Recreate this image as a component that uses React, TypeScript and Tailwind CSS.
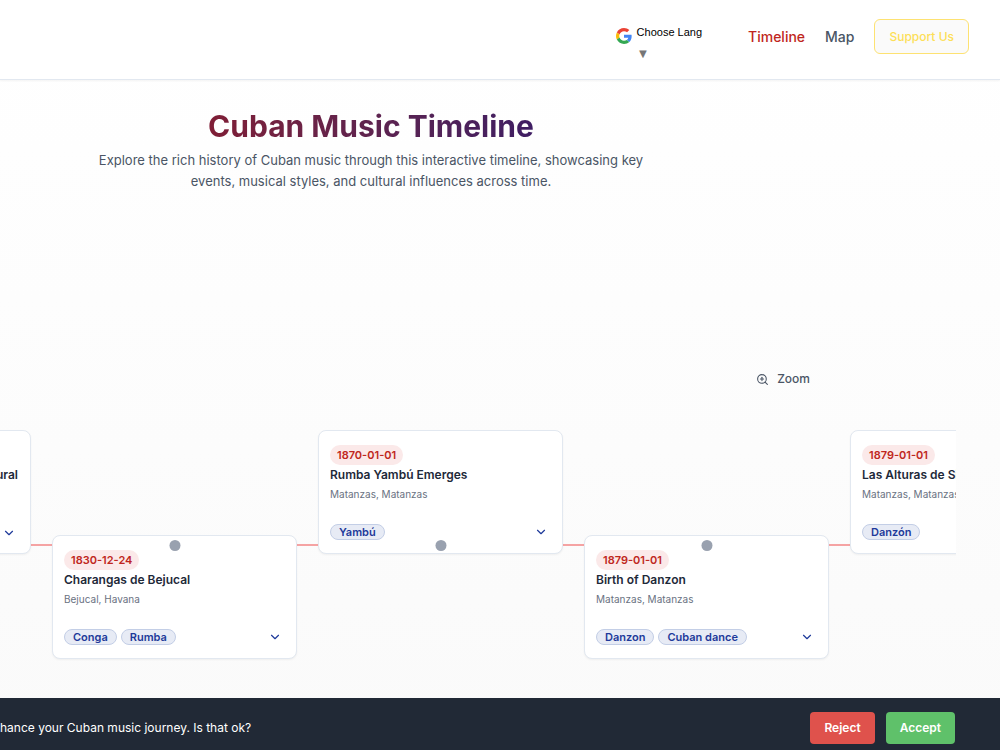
import { useState, type FC } from "react";
import { ChevronDown, ZoomIn } from "lucide-react";

type TimelineEvent = {
    id: number;
    date?: string;
    title: string;
    location?: string;
    styles: string[];
};

const events: TimelineEvent[] = [
    { id: 1, title: "ural", styles: [] },
    { id: 2, date: "1830-12-24", title: "Charangas de Bejucal", location: "Bejucal, Havana", styles: ["Conga", "Rumba"] },
    { id: 3, date: "1870-01-01", title: "Rumba Yambú Emerges", location: "Matanzas, Matanzas", styles: ["Yambú"] },
    { id: 4, date: "1879-01-01", title: "Birth of Danzon", location: "Matanzas, Matanzas", styles: ["Danzon", "Cuban dance"] },
    { id: 5, date: "1879-01-01", title: "Las Alturas de Si", location: "Matanzas, Matanzas", styles: ["Danzón"] },
];

const GoogleLogo: FC = () => (
    <svg viewBox="0 0 48 48" className="size-4" aria-hidden="true">
        <path fill="#EA4335" d="M24 9.5c3.54 0 6.71 1.22 9.21 3.6l6.85-6.85C35.9 2.38 30.47 0 24 0 14.62 0 6.51 5.38 2.56 13.22l7.98 6.19C12.43 13.72 17.74 9.5 24 9.5z" />
        <path fill="#4285F4" d="M46.98 24.55c0-1.57-.15-3.09-.38-4.55H24v9.02h12.94c-.58 2.96-2.26 5.48-4.78 7.18l7.73 6c4.51-4.18 7.09-10.36 7.09-17.65z" />
        <path fill="#FBBC05" d="M10.53 28.59c-.48-1.45-.76-2.99-.76-4.59s.27-3.14.76-4.59l-7.98-6.19C.92 16.46 0 20.12 0 24c0 3.88.92 7.54 2.56 10.78l7.97-6.19z" />
        <path fill="#34A853" d="M24 48c6.48 0 11.93-2.13 15.89-5.81l-7.73-6c-2.15 1.45-4.92 2.3-8.16 2.3-6.26 0-11.57-4.22-13.47-9.91l-7.98 6.19C6.51 42.62 14.62 48 24 48z" />
    </svg>
);

const Header: FC = () => (
    <header className="flex h-20 items-start justify-end border-b border-slate-200 bg-white pr-[31px] shadow-xs">
        <button className="mr-[46px] mt-6 flex cursor-pointer items-start gap-[5px] font-['Liberation_Sans',sans-serif] text-[11px] text-black">
            <span className="mt-1"><GoogleLogo /></span>
            <span className="flex flex-col items-start">
                <span className="leading-4">Choose Lang</span>
                <span className="mt-1 text-[13px] leading-5 text-[#767676]">▼</span>
            </span>
        </button>
        <nav className="mt-[19px] flex items-center gap-5 text-[14px] font-medium">
            <a href="#timeline" className="text-[#bf2620]">Timeline</a>
            <a href="#map" className="text-gray-600">Map</a>
            <a href="#support" className="flex h-[35px] items-center rounded-md border border-[#fde272] bg-[#fafafa] px-3.5 text-[12px] text-[#fddf57]">
                Support Us
            </a>
        </nav>
    </header>
);

const EventCard: FC<{ event: TimelineEvent; lower: boolean }> = ({ event, lower }) => {
    const [open, setOpen] = useState<boolean>(false);

    return (
        <article className={`relative flex h-[124px] w-[245px] shrink-0 flex-col rounded-lg border border-slate-200 bg-white px-[11px] pt-3.5 pb-3 shadow-xs ${lower ? "mt-[105px]" : ""}`}>
            <span className={`absolute left-1/2 size-[11px] -translate-x-1/2 rounded-full bg-gray-400 ${lower ? "top-1" : "bottom-0.5"}`} />
            <div className="flex h-5">
                {event.date && (
                    <time className="flex items-center rounded-full bg-[#fbe9e9] px-[7px] text-[11px] font-semibold text-[#bf2620]">
                        {event.date}
                    </time>
                )}
            </div>
            <h3 className={`text-[12px] leading-5 font-semibold whitespace-nowrap text-gray-800 ${event.date ? "" : "pr-px text-right"}`}>
                {event.title}
            </h3>
            <p className="text-[10px] leading-[18px] whitespace-nowrap text-gray-500">{event.location}</p>
            <div className="mt-auto flex items-center gap-1 pb-px">
                {event.styles.map((style) => (
                    <span key={style} className="flex h-4 items-center rounded-full border border-[#c3cee6] bg-[#e7ebf5] px-2 text-[11px] font-semibold text-[#1e3a9a]">
                        {style}
                    </span>
                ))}
                <button
                    className="mr-[3px] ml-auto cursor-pointer text-[#1e3a9a]"
                    aria-label="Details"
                    aria-expanded={open}
                    onClick={() => setOpen(!open)}
                >
                    <ChevronDown size={14} />
                </button>
            </div>
        </article>
    );
};

const Timeline: FC = () => (
    <section className="relative mr-11 overflow-hidden pb-10">
        <div className="absolute inset-x-0 top-[114px] h-0.5 bg-[#f5a3a3]" />
        <div className="-ml-[214px] flex items-start gap-[21px]">
            {events.map((event, index) => (
                <EventCard key={event.id} event={event} lower={index % 2 === 1} />
            ))}
        </div>
    </section>
);

const CookieBanner: FC = () => (
    <div className="fixed inset-x-0 bottom-0 flex items-center justify-between bg-[#212936] pt-3.5 pr-[45px] pb-1.5 text-white">
        <p className="text-[12px] whitespace-nowrap">hance your Cuban music journey. Is that ok?</p>
        <div className="flex gap-[11px] text-[12px] font-semibold">
            <button className="h-8 cursor-pointer rounded-[4px] bg-[#df524c] px-3.5">Reject</button>
            <button className="h-8 cursor-pointer rounded-[4px] bg-[#5fc16a] px-3.5">Accept</button>
        </div>
    </div>
);

const App: FC = () => (
    <div className="min-h-screen overflow-hidden bg-linear-to-b from-white to-[#fafafa] font-[Inter,sans-serif]">
        <Header />
        <main>
            <div className="mr-[258px] flex flex-col items-center pt-7 text-center">
                <h1 className="bg-linear-to-r from-[#7f1d35] to-[#3f1d63] bg-clip-text text-[30px] leading-9 font-bold text-transparent">
                    Cuban Music Timeline
                </h1>
                <p className="mt-1.5 max-w-[560px] text-[13px] leading-[21px] text-gray-600">
                    Explore the rich history of Cuban music through this interactive timeline, showcasing key events, musical styles, and cultural influences across time.
                </p>
            </div>
            <div className="mt-[177px] mr-[190px] mb-[41px] flex justify-end">
                <button className="flex cursor-pointer items-center gap-2 text-[12px] leading-5 font-medium text-gray-600">
                    <ZoomIn size={13} />
                    Zoom
                </button>
            </div>
            <Timeline />
        </main>
        <CookieBanner />
    </div>
);

export default App;
